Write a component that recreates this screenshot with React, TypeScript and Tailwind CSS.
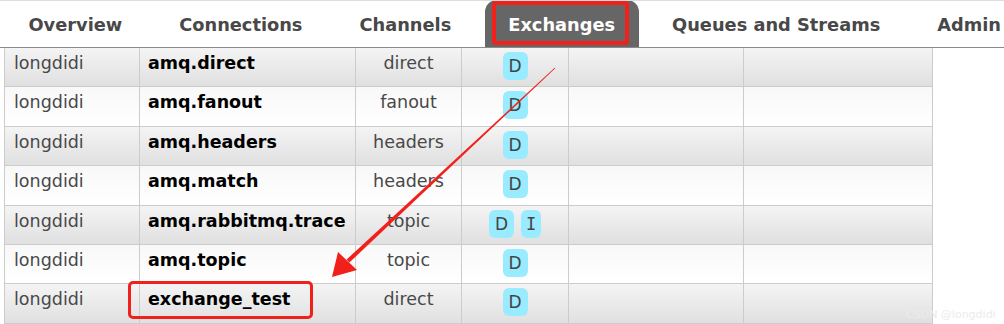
import React from "react";

const rows: { name: string; type: string; features: string[] }[] = [
  { name: "amq.direct", type: "direct", features: ["D"] },
  { name: "amq.fanout", type: "fanout", features: ["D"] },
  { name: "amq.headers", type: "headers", features: ["D"] },
  { name: "amq.match", type: "headers", features: ["D"] },
  { name: "amq.rabbitmq.trace", type: "topic", features: ["D", "I"] },
  { name: "amq.topic", type: "topic", features: ["D"] },
  { name: "exchange_test", type: "direct", features: ["D"] },
];

const tabs = ["Overview", "Connections", "Channels", "Exchanges", "Queues and Streams", "Admin"];

export default function App() {
  return (
    <div
      className="relative w-[1004px] h-[324px] overflow-hidden bg-white"
      style={{ fontFamily: '"DejaVu Sans", Verdana, sans-serif' }}
    >
      {/* nav */}
      <div className="h-[48px] border-t border-[#dddddd] border-b border-b-[#8a8a8a] flex gap-[10px] pl-[5px] whitespace-nowrap overflow-hidden">
        {tabs.map((t) =>
          t === "Exchanges" ? (
            <div
              key={t}
              className="relative -mt-[1px] h-[47px] px-[23.5px] pt-[2px] leading-[45px] text-[17.8px] font-bold text-white bg-[#666666] rounded-t-[12px] shrink-0"
            >
              {t}
              <div className="absolute left-[7px] top-[1px] w-[137px] h-[44px] border-[4px] border-[#f2201a] rounded-[4px]" />
            </div>
          ) : (
            <div
              key={t}
              className="h-[46px] px-[23.5px] pt-[2px] leading-[44px] text-[17.8px] font-bold text-[#484848] shrink-0"
            >
              {t}
            </div>
          )
        )}
      </div>

      {/* table */}
      <div className="ml-[4px] w-[929px] flex flex-col">
        {rows.map((r, i) => (
          <div
            key={r.name}
            className={
              "grid grid-cols-[135px_216px_106px_107px_175px_190px] h-[39.4px] border-b border-[#cccccc] text-[17.5px] leading-[20px] " +
              (i % 2 === 0
                ? "bg-gradient-to-b from-[#f4f4f4] to-[#e0e0e0]"
                : "bg-gradient-to-b from-[#f8f8f8] to-[#ffffff]")
            }
          >
            <div className="border-l border-[#cccccc] pl-[9px] pt-[5px] text-[#484848]">longdidi</div>
            <div className="border-l border-[#cccccc] pl-[8px] pt-[5px] font-bold text-[#000000] whitespace-nowrap">
              {r.name}
            </div>
            <div className="border-l border-[#cccccc] pt-[5px] text-center text-[#484848]">{r.type}</div>
            <div className="border-l border-[#cccccc] pt-[4px] flex justify-center gap-[7px]">
              {r.features.map((f) =>
                f === "I" ? (
                  <span
                    key={f}
                    className="h-[28px] w-[20px] rounded-[6px] bg-[#99ebff] text-[#444444] text-[17px] leading-[28px] text-center"
                    style={{ fontFamily: '"DejaVu Sans Mono", monospace' }}
                  >
                    {f}
                  </span>
                ) : (
                  <span
                    key={f}
                    className="h-[28px] w-[25px] rounded-[6px] bg-[#99ebff] text-[#444444] text-[17px] leading-[28px] text-center"
                  >
                    {f}
                  </span>
                )
              )}
            </div>
            <div className="border-l border-[#cccccc]" />
            <div className="border-l border-r border-[#cccccc]" />
          </div>
        ))}
      </div>

      {/* annotation box */}
      <div className="absolute left-[128px] top-[281px] w-[185px] h-[38px] border-[3px] border-[#f2201a] rounded-[5px]" />

      {/* arrow */}
      <svg className="absolute left-0 top-0 pointer-events-none" width="1004" height="324" viewBox="0 0 1004 324">
        <polygon points="555.3,68.3 554.7,67.7 346.6,259.5 349.4,262.5" fill="#f2201a" />
        <polygon points="332,277 338,252 357,270" fill="#f2201a" />
      </svg>

      {/* watermark */}
      <div className="absolute left-[906px] top-[308px] text-[11px] leading-[14px] text-[#ececec] whitespace-nowrap">
        CSDN @longdidi
      </div>
    </div>
  );
}
